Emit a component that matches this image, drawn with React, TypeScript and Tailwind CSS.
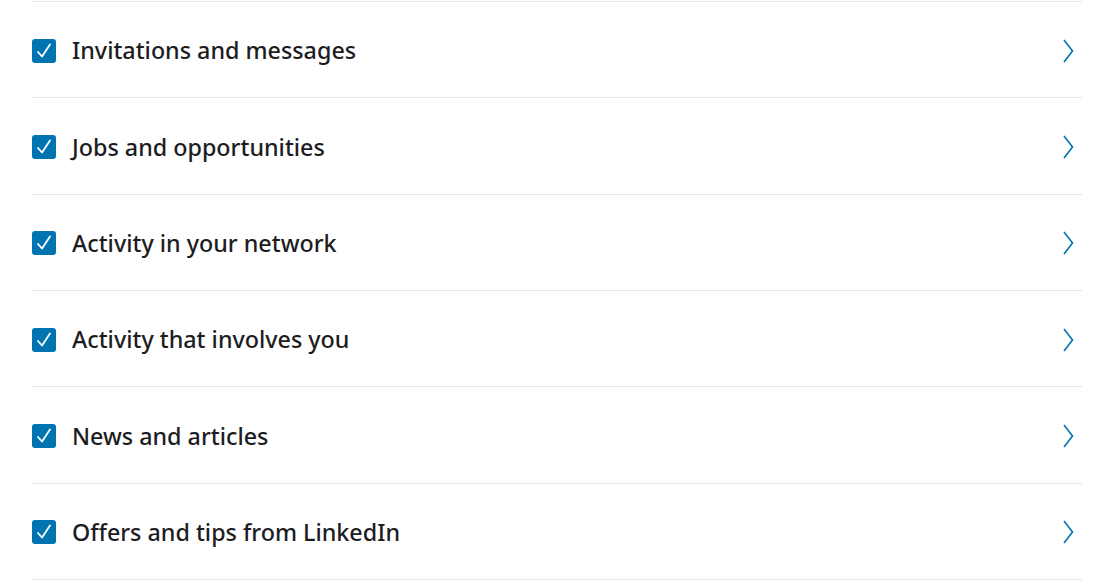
const items = [
  "Invitations and messages",
  "Jobs and opportunities",
  "Activity in your network",
  "Activity that involves you",
  "News and articles",
  "Offers and tips from LinkedIn",
];

function CheckBox() {
  return (
    <span className="flex h-6 w-6 shrink-0 items-center justify-center rounded-[3px] bg-[#0073b1]">
      <svg width="24" height="24" viewBox="0 0 24 24" fill="none">
        <path d="M6 13l4 4.5 8-12" stroke="white" strokeWidth="1.8" strokeLinecap="round" strokeLinejoin="round" />
      </svg>
    </span>
  );
}

function Chevron() {
  return (
    <svg width="12" height="24" viewBox="0 0 12 24" fill="none">
      <path d="M2 1l8.5 11-8.5 11" stroke="#0073b1" strokeWidth="1.6" />
    </svg>
  );
}

export default function App() {
  return (
    <div className="min-h-[588px] w-[1120px] bg-white pt-px font-['Noto_Sans',sans-serif]">
      <ul className="ml-8 w-[1050px] border-b border-[#e6e6e6]">
        {items.map((label) => (
          <li
            key={label}
            className="flex h-[96.33px] items-center border-t border-[#e6e6e6] pr-[8px] pt-[2px]"
          >
            <CheckBox />
            <span className="ml-4 flex-1 text-[23.3px] font-medium text-[#1d1d1f]">{label}</span>
            <Chevron />
          </li>
        ))}
      </ul>
    </div>
  );
}
